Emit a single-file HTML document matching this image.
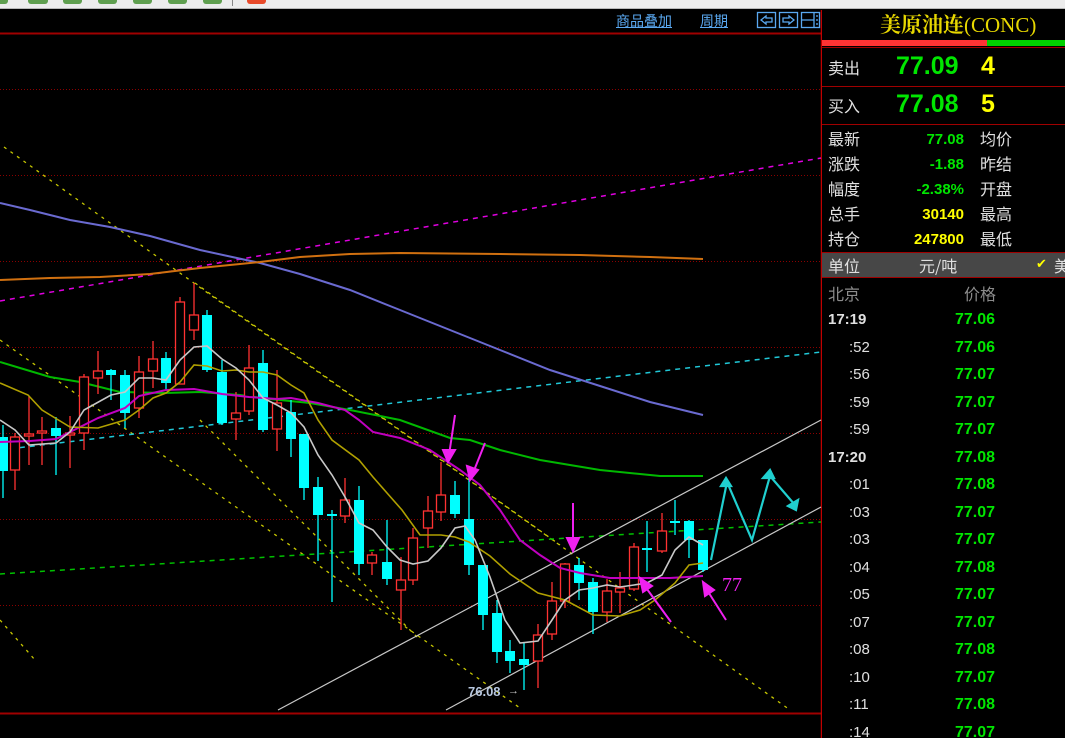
<!DOCTYPE html>
<html style="width:1065px;height:738px;overflow:hidden"><head><meta charset="utf-8"><style>
*{margin:0;padding:0;box-sizing:border-box}
body{width:1065px;height:738px;background:#000;overflow:hidden;position:relative;font-family:"Liberation Sans","Noto Sans CJK SC",sans-serif}
.t{position:absolute;white-space:nowrap}
.cn{font-family:"Noto Sans CJK SC","WenQuanYi Zen Hei",sans-serif}
.g{color:#00e600}.y{color:#ffff00}.w{color:#e0e0e0}
</style></head><body>
<div style="position:absolute;left:0;top:0;width:1065px;height:9px;background:#ececec;border-bottom:1px solid #b8b8b8"></div>
<div style="position:absolute;left:-4px;top:0;width:12px;height:4px;background:#5f9f4f;border-radius:0 0 3px 3px"></div>
<div style="position:absolute;left:28px;top:0;width:20px;height:4px;background:#5f9f4f;border-radius:0 0 3px 3px"></div>
<div style="position:absolute;left:63px;top:0;width:19px;height:4px;background:#5f9f4f;border-radius:0 0 3px 3px"></div>
<div style="position:absolute;left:98px;top:0;width:19px;height:4px;background:#5f9f4f;border-radius:0 0 3px 3px"></div>
<div style="position:absolute;left:133px;top:0;width:19px;height:4px;background:#5f9f4f;border-radius:0 0 3px 3px"></div>
<div style="position:absolute;left:168px;top:0;width:19px;height:4px;background:#5f9f4f;border-radius:0 0 3px 3px"></div>
<div style="position:absolute;left:203px;top:0;width:19px;height:4px;background:#5f9f4f;border-radius:0 0 3px 3px"></div>
<div style="position:absolute;left:232px;top:0;width:1px;height:6px;background:#888"></div>
<div style="position:absolute;left:247px;top:0;width:19px;height:4px;background:#e84a2a;border-radius:0 0 3px 3px"></div>

<svg width="822" height="738" style="position:absolute;left:0;top:0">
<g stroke="#8b0000" stroke-width="1" stroke-dasharray="1,2">
<line x1="0" y1="89.5" x2="821" y2="89.5"/><line x1="0" y1="175.5" x2="821" y2="175.5"/><line x1="0" y1="261.5" x2="821" y2="261.5"/><line x1="0" y1="347.5" x2="821" y2="347.5"/><line x1="0" y1="433.5" x2="821" y2="433.5"/><line x1="0" y1="519.5" x2="821" y2="519.5"/><line x1="0" y1="605.5" x2="821" y2="605.5"/>
</g>
<line x1="0" y1="33.5" x2="821" y2="33.5" stroke="#a00000" stroke-width="2"/>
<line x1="0" y1="713.5" x2="821" y2="713.5" stroke="#a00000" stroke-width="2"/>
<line x1="821.5" y1="10" x2="821.5" y2="738" stroke="#c00000" stroke-width="1.5"/>
<g stroke="#c8c800" stroke-width="1.3" stroke-dasharray="3,5" fill="none">
<line x1="4" y1="147" x2="790" y2="710"/>
<line x1="195" y1="283" x2="560" y2="545"/>
<line x1="0" y1="340" x2="520" y2="708"/>
<line x1="200" y1="420" x2="420" y2="640"/>
<line x1="0" y1="620" x2="35" y2="660"/>
</g>
<line x1="0" y1="301" x2="821" y2="158" stroke="#e000e0" stroke-width="1.5" stroke-dasharray="5,5"/>
<line x1="0" y1="450" x2="821" y2="352" stroke="#20c8d8" stroke-width="1.5" stroke-dasharray="5,5"/>
<line x1="0" y1="574" x2="821" y2="522" stroke="#00c000" stroke-width="1.5" stroke-dasharray="5,5"/>
<line x1="278" y1="710" x2="821" y2="420" stroke="#c8c8c8" stroke-width="1.2"/>
<line x1="446" y1="710" x2="821" y2="507" stroke="#c8c8c8" stroke-width="1.2"/>
<polyline fill="none" stroke="#6a6ad0" stroke-width="2" points="0,203 30,210 70,220 110,227 150,236 200,250 260,263 300,274 350,290 400,310 450,330 500,350 550,370 600,386 650,402 703,415"/>
<polyline fill="none" stroke="#d07010" stroke-width="2" points="0,280 50,278 100,277 150,274 200,268 260,262 300,257 350,254 400,253 500,254 580,255 650,257 703,259"/>
<polyline fill="none" stroke="#00b800" stroke-width="2" points="0,362 20,368 50,377 80,382 120,392 165,393 200,392 240,395 270,399 310,403 350,410 400,420 450,438 470,440 500,450 540,460 600,470 640,474 660,476 703,476"/>
<g id="c"></g>
<polyline fill="none" stroke="#c000c0" stroke-width="2" points="0,442 30,441 56,439 70,432 98,418 125,408 139,396 166,390 194,389 222,394 249,397 277,399 291,398 318,403 345,410 359,420 373,432 400,438 430,450 460,470 480,485 500,510 520,540 540,555 560,568 580,573 610,578 640,578 670,578 703,576"/>
<polyline fill="none" stroke="#b0a000" stroke-width="1.6" points="0,383 28,395 42,410 70,427 98,428 125,420 139,410 153,398 166,393 180,382 194,365 207,366 222,371 236,370 249,372 263,372 277,375 291,385 304,393 318,420 332,440 359,460 373,477 387,493 402,510 420,535 441,535 455,537 469,542 490,556 510,574 538,593 565,600 593,615 620,616 640,610 655,600 675,583 689,565 703,563"/>
<polyline fill="none" stroke="#c8c8c8" stroke-width="1.6" points="0,420 15,430 29,445 56,443 70,432 84,410 111,395 125,392 139,378 153,378 166,380 180,360 194,347 207,346 222,359 236,368 249,380 263,398 277,405 291,413 304,427 318,455 332,475 345,497 359,523 373,530 387,547 400,560 413,564 428,561 441,548 455,528 465,526 475,540 490,577 505,620 520,643 538,641 552,620 565,600 579,590 593,588 607,585 620,587 634,585 647,583 662,575 675,550 689,537 703,545"/>
<g stroke="#f020f0" stroke-width="2" fill="#f020f0">
<line x1="455" y1="415" x2="449" y2="455"/><polygon points="443,450 455,450 448,462"/>
<line x1="485" y1="443" x2="473" y2="473"/><polygon points="467,466 478,470 470,480"/>
<line x1="573" y1="503" x2="573" y2="545"/><polygon points="567,538 579,538 573,551"/>
<line x1="671" y1="622" x2="644" y2="585"/><polygon points="640,578 652,586 643,592"/>
<line x1="726" y1="620" x2="707" y2="590"/><polygon points="703,582 714,590 705,596"/>
</g>
<g stroke="#20d0d0" stroke-width="2.2" fill="#20d0d0">
<polyline fill="none" points="711,560 727,482 752,540 770,476 795,505"/>
<polygon points="721,486 731,486 726,478"/>
<polygon points="763,478 774,478 770,470"/>
<polygon points="788,506 798,500 796,510"/>
</g>
<text x="722" y="591" fill="#f020f0" font-family="Liberation Serif,serif" font-size="20">77</text>
<text x="468" y="696" fill="#b8c8e0" font-family="Liberation Sans,sans-serif" font-size="13" font-weight="bold">76.08</text>
<text x="508" y="694" fill="#c8c8c8" font-size="11">→</text>
</svg>

<div class="t cn" style="left:616px;top:12px;font-size:14px;color:#5aa8f0;text-decoration:underline;line-height:18px">商品叠加</div>
<div class="t cn" style="left:700px;top:12px;font-size:14px;color:#5aa8f0;text-decoration:underline;line-height:18px">周期</div>
<svg width="66" height="18" style="position:absolute;left:756px;top:11px" fill="none" stroke="#5aa8f0" stroke-width="1.3">
<rect x="1.5" y="1.5" width="18" height="15"/><rect x="23.5" y="1.5" width="18" height="15"/><rect x="45.5" y="1.5" width="18" height="15"/>
<path d="M5 9 L10 5 L10 7 L16 7 L16 11 L10 11 L10 13 Z"/><path d="M38 9 L33 5 L33 7 L27 7 L27 11 L33 11 L33 13 Z"/><path d="M46 9 L58 9 M58 2 L58 16"/><path d="M61 4 L61 6 M61 8 L61 10 M61 12 L61 14"/>
</svg>

<div class="t cn" style="left:880px;top:10px;font-size:21px;font-weight:bold;color:#e8d800;line-height:28px;font-family:'Noto Serif CJK SC','Liberation Serif',serif">美原油连<span style="font-family:'Liberation Serif',serif;font-weight:normal">(CONC)</span></div>
<div style="position:absolute;left:822px;top:40px;width:165px;height:6px;background:#ff3434"></div>
<div style="position:absolute;left:987px;top:40px;width:78px;height:6px;background:#00d000"></div>
<div style="position:absolute;left:822px;top:47px;width:243px;height:1px;background:#a00000"></div>
<div style="position:absolute;left:822px;top:86px;width:243px;height:1px;background:#a00000"></div>
<div style="position:absolute;left:822px;top:124px;width:243px;height:1px;background:#a00000"></div>
<div class="t cn w" style="left:828px;top:55px;font-size:16px">卖出</div>
<div class="t g" style="left:896px;top:52px;font-size:25px;font-weight:bold">77.09</div>
<div class="t y" style="left:981px;top:52px;font-size:25px;font-weight:bold">4</div>
<div class="t cn w" style="left:828px;top:93px;font-size:16px">买入</div>
<div class="t g" style="left:896px;top:90px;font-size:25px;font-weight:bold">77.08</div>
<div class="t y" style="left:981px;top:90px;font-size:25px;font-weight:bold">5</div>

<div class="t cn w" style="left:828px;top:126px;font-size:16px;line-height:25px">最新<br>涨跌<br>幅度<br>总手<br>持仓</div>
<div class="t" style="left:884px;top:127px;width:80px;text-align:right;font-size:15px;font-weight:bold;line-height:25px"><span class="g">77.08</span><br><span class="g">-1.88</span><br><span class="g">-2.38%</span><br><span class="y">30140</span><br><span class="y">247800</span></div>
<div class="t cn w" style="left:980px;top:126px;font-size:16px;line-height:25px">均价<br>昨结<br>开盘<br>最高<br>最低</div>

<div style="position:absolute;left:822px;top:252px;width:243px;height:26px;background:#474747;border-top:1px solid #a00000;border-bottom:1px solid #a00000"></div>
<div class="t cn" style="left:828px;top:253px;font-size:16px;color:#e0e0e0">单位</div>
<div class="t cn" style="left:919px;top:253px;font-size:16px;color:#e0e0e0">元/吨</div>
<div class="t" style="left:1036px;top:256px;font-size:13px;color:#ffff00">✔</div>
<div class="t cn" style="left:1054px;top:253px;font-size:16px;color:#e0e0e0">美</div>
<div class="t cn" style="left:828px;top:281px;font-size:16px;color:#8c8c8c">北京</div>
<div class="t cn" style="left:964px;top:281px;font-size:16px;color:#8c8c8c">价格</div>

<div class="t" style="left:828px;top:306px;font-size:15px;line-height:27.5px;color:#e0e0e0;height:432px;overflow:hidden">
<b>17:19</b><br><span style="margin-left:21px">:52</span><br><span style="margin-left:21px">:56</span><br><span style="margin-left:21px">:59</span><br><span style="margin-left:21px">:59</span><br><b>17:20</b><br><span style="margin-left:21px">:01</span><br><span style="margin-left:21px">:03</span><br><span style="margin-left:21px">:03</span><br><span style="margin-left:21px">:04</span><br><span style="margin-left:21px">:05</span><br><span style="margin-left:21px">:07</span><br><span style="margin-left:21px">:08</span><br><span style="margin-left:21px">:10</span><br><span style="margin-left:21px">:11</span><br><span style="margin-left:21px">:14</span></div>
<div class="t g" style="left:955px;top:306px;font-size:16px;font-weight:bold;line-height:27.5px;height:432px;overflow:hidden">77.06<br>77.06<br>77.07<br>77.07<br>77.07<br>77.08<br>77.08<br>77.07<br>77.07<br>77.08<br>77.07<br>77.07<br>77.08<br>77.07<br>77.08<br>77.07</div>

<script>
var d=[[3,437,471,425,498,'c'],[15,437,470,433,490,'r'],[29,434,436,396,465,'r'],[42,431,433,417,465,'r'],[56,428,436,417,475,'c'],[70,433,435,416,468,'r'],[84,377,433,374,450,'r'],[98,371,378,351,394,'r'],[111,370,375,369,400,'c'],[125,375,413,370,428,'c'],[139,372,408,356,418,'r'],[153,359,371,341,388,'r'],[166,358,383,352,390,'c'],[180,302,384,297,384,'r'],[194,315,330,283,340,'r'],[207,315,370,310,372,'c'],[222,372,423,360,425,'c'],[236,413,419,392,440,'r'],[249,368,411,345,415,'r'],[263,363,430,350,432,'c'],[277,403,429,370,451,'r'],[291,412,439,400,457,'c'],[304,434,488,434,500,'c'],[318,487,515,477,561,'c'],[332,514,515,510,602,'c'],[345,500,516,478,523,'r'],[359,500,564,486,575,'c'],[372,555,563,552,575,'r'],[387,562,579,520,585,'c'],[401,580,590,557,630,'r'],[413,538,580,528,585,'r'],[428,511,528,496,548,'r'],[441,495,512,462,521,'r'],[455,495,514,481,518,'c'],[469,519,565,475,575,'c'],[483,565,615,565,630,'c'],[497,613,652,600,663,'c'],[510,651,661,640,673,'c'],[524,659,665,642,690,'c'],[538,635,661,624,688,'r'],[552,601,634,582,640,'r'],[565,564,601,563,608,'r'],[579,565,583,558,600,'c'],[593,582,612,578,634,'c'],[607,591,612,579,622,'r'],[620,588,592,572,613,'r'],[634,547,589,543,591,'r'],[647,548,550,521,572,'c'],[662,531,551,513,553,'r'],[675,521,523,500,535,'c'],[689,521,540,520,558,'c'],[703,540,570,540,572,'c']];
var s='';d.forEach(function(a){var x=a[0],col=a[5]=='c'?'#00ffff':'#ff3232';
s+='<line x1="'+x+'" y1="'+a[3]+'" x2="'+x+'" y2="'+a[4]+'" stroke="'+col+'" stroke-width="1.3"/>';
var h=Math.max(a[2]-a[1],2);
if(a[5]=='c')s+='<rect x="'+(x-5)+'" y="'+a[1]+'" width="10" height="'+h+'" fill="#00ffff"/>';
else s+='<rect x="'+(x-4.5)+'" y="'+a[1]+'" width="9" height="'+h+'" fill="#000" stroke="#ff3232" stroke-width="1.3"/>';});
document.getElementById('c').innerHTML=s;
</script>
</body></html>
